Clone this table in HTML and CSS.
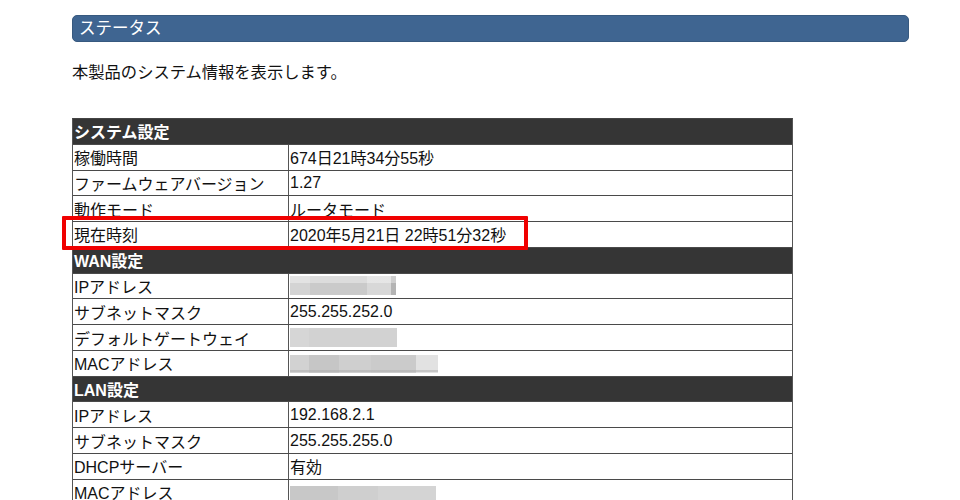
FILE: index.html
```html
<!DOCTYPE html>
<html lang="ja">
<head>
<meta charset="utf-8">
<title>ステータス</title>
<link rel="stylesheet" href="styles.css">
</head>
<body>
<div class="page">
  <div class="title-bar">ステータス</div>
  <p class="desc">本製品のシステム情報を表示します。</p>
  <div class="status-table">
    <div class="row head"><div class="cell full">システム設定</div></div>
    <div class="row"><div class="cell label">稼働時間</div><div class="cell value">674日21時34分55秒</div></div>
    <div class="row"><div class="cell label">ファームウェアバージョン</div><div class="cell value">1.27</div></div>
    <div class="row"><div class="cell label">動作モード</div><div class="cell value">ルータモード</div></div>
    <div class="row"><div class="cell label">現在時刻</div><div class="cell value">2020年5月21日 22時51分32秒</div></div>
    <div class="row head"><div class="cell full">WAN設定</div></div>
    <div class="row"><div class="cell label">IPアドレス</div><div class="cell value"><span class="blur blur-wan-ip"></span></div></div>
    <div class="row"><div class="cell label">サブネットマスク</div><div class="cell value">255.255.252.0</div></div>
    <div class="row"><div class="cell label">デフォルトゲートウェイ</div><div class="cell value"><span class="blur blur-gw"></span></div></div>
    <div class="row"><div class="cell label">MACアドレス</div><div class="cell value"><span class="blur blur-wan-mac"></span></div></div>
    <div class="row head"><div class="cell full">LAN設定</div></div>
    <div class="row"><div class="cell label">IPアドレス</div><div class="cell value">192.168.2.1</div></div>
    <div class="row"><div class="cell label">サブネットマスク</div><div class="cell value">255.255.255.0</div></div>
    <div class="row"><div class="cell label">DHCPサーバー</div><div class="cell value">有効</div></div>
    <div class="row"><div class="cell label">MACアドレス</div><div class="cell value"><span class="blur blur-lan-mac"></span></div></div>
    <div class="highlight"></div>
  </div>
</div>
</body>
</html>
```

FILE: styles.css
```css
html, body {
  margin: 0;
  padding: 0;
  background: #ffffff;
}
body {
  font-family: "Liberation Sans", "Noto Sans CJK JP", sans-serif;
  color: #111;
  font-size: 16px;
}
.page {
  padding: 15px 0 0 72px;
  width: 837px;
}
.title-bar {
  background: #3f6591;
  border: 1px solid #37597f;
  border-radius: 5px;
  height: 25px;
  line-height: 25px;
  color: #ffffff;
  font-size: 16.5px;
  padding-left: 6px;
  box-sizing: content-box;
}
.desc {
  margin: 18px 0 0 0;
  line-height: 24px;
  height: 24px;
  font-size: 16.3px;
}
.status-table {
  position: relative;
  margin-top: 34px;
  width: 719px;
  border-top: 1px solid #444;
  border-left: 1px solid #555;
  border-right: 1px solid #555;
}
.row {
  display: grid;
  grid-template-columns: 216px 1fr;
  height: 25.77px;
  box-sizing: border-box;
  border-bottom: 1px solid #4a4a4a;
}
.row.head {
  grid-template-columns: 1fr;
  background: #353535;
}
.cell {
  display: flex;
  align-items: center;
  padding-left: 1px;
  white-space: nowrap;
  overflow: hidden;
}
.cell.full {
  color: #ffffff;
  font-weight: bold;
}
.cell.label {
  border-right: 1px solid #555;
}
.cell.value {
  padding-left: 1px;
}
.blur {
  display: inline-block;
}
.blur-wan-ip {
  width: 113px;
  height: 19px;
  background:
    linear-gradient(to bottom, rgba(255,255,255,0.35) 0 35%, rgba(255,255,255,0) 35%),
    linear-gradient(to right, #d4d4d4 0 18%, #cacaca 18% 68%, #d8d8d8 68% 89%, #b4b4b4 89% 94%, #ffffff 94%);
}
.blur-gw {
  width: 107px;
  height: 19px;
  background: linear-gradient(to right, #d6d6d6 0 18%, #d2d2d2 18% 100%);
}
.blur-wan-mac {
  width: 148px;
  height: 18px;
  margin-top: 2px;
  background:
    linear-gradient(to bottom, rgba(0,0,0,0) 0 82%, rgba(170,170,170,0.5) 82% 95%, rgba(255,255,255,0) 95%),
    linear-gradient(to right, #d2d2d2 0 13%, #c6c6c6 13% 33%, #cfcfcf 33% 55%, #cbcbcb 55% 85%, #e2e2e2 85% 100%);
}
.blur-lan-mac {
  width: 146px;
  height: 18px;
  margin-top: 6px;
  background: linear-gradient(to right, #c8c8c8 0 33%, #cfcfcf 33% 60%, #d4d4d4 60% 100%);
}
.highlight {
  position: absolute;
  left: -11px;
  top: 97px;
  width: 466px;
  height: 34px;
  border: 4px solid #f00000;
  box-sizing: border-box;
  border-radius: 1px;
}
```
